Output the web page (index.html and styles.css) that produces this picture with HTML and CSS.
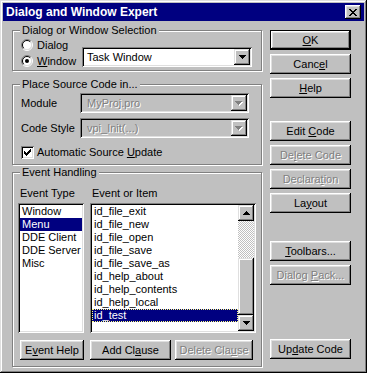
FILE: index.html
```html
<!DOCTYPE html>
<html>
<head>
    <title>Dialog and Window Expert</title>
    <link rel="stylesheet" href="styles.css">
</head>
<body>
    <div class="window">
        <div class="titlebar">
            <span class="title">Dialog and Window Expert</span>
            <button class="close">
                <svg width="8" height="7" viewBox="0 0 8 7" shape-rendering="crispEdges"><path d="M0 0h2v1H0zM6 0h2v1H6zM1 1h2v1H1zM5 1h2v1H5zM2 2h4v1H2zM3 3h2v1H3zM2 4h4v1H2zM1 5h2v1H1zM5 5h2v1H5zM0 6h2v1H0zM6 6h2v1H6z" fill="#000"/></svg>
            </button>
        </div>

        <div class="main">
            <div class="left">
                <fieldset class="group">
                    <legend>Dialog or Window Selection</legend>
                    <div class="sel">
                        <div class="radios">
                            <div class="radio">
                                <svg width="12" height="12" viewBox="0 0 12 12"><circle cx="6" cy="6" r="4.5" fill="#fff"/><path d="M2.1 9.9A5.5 5.5 0 0 1 9.9 2.1" stroke="#808080" fill="none"/><path d="M9.9 2.1A5.5 5.5 0 0 1 2.1 9.9" stroke="#fff" fill="none"/><path d="M2.8 9.2A4.5 4.5 0 0 1 9.2 2.8" stroke="#000" fill="none"/><path d="M9.2 2.8A4.5 4.5 0 0 1 2.8 9.2" stroke="#dfdfdf" fill="none"/></svg>
                                <span>Dialog</span>
                            </div>
                            <div class="radio">
                                <svg width="12" height="12" viewBox="0 0 12 12"><circle cx="6" cy="6" r="4.5" fill="#fff"/><path d="M2.1 9.9A5.5 5.5 0 0 1 9.9 2.1" stroke="#808080" fill="none"/><path d="M9.9 2.1A5.5 5.5 0 0 1 2.1 9.9" stroke="#fff" fill="none"/><path d="M2.8 9.2A4.5 4.5 0 0 1 9.2 2.8" stroke="#000" fill="none"/><path d="M9.2 2.8A4.5 4.5 0 0 1 2.8 9.2" stroke="#dfdfdf" fill="none"/><circle cx="6" cy="6" r="2" fill="#000"/></svg>
                                <span><u>W</u>indow</span>
                            </div>
                        </div>
                        <div class="combo task">
                            <span class="val">Task Window</span>
                            <span class="drop"><svg width="7" height="4" viewBox="0 0 7 4" shape-rendering="crispEdges"><path d="M0 0h7v1H0zM1 1h5v1H1zM2 2h3v1H2zM3 3h1v1H3z" fill="#000"/></svg></span>
                        </div>
                    </div>
                </fieldset>

                <fieldset class="group g-source">
                    <legend>Place Source Code in...</legend>
                    <div class="source">
                        <div class="field">
                            <span>Module</span>
                            <div class="combo disabled">
                                <span class="val">MyProj.pro</span>
                                <span class="drop"><svg width="8" height="5" viewBox="0 0 8 5" shape-rendering="crispEdges"><path d="M1 1h7v1H1zM2 2h5v1H2zM3 3h3v1H3zM4 4h1v1H4z" fill="#fff"/><path d="M0 0h7v1H0zM1 1h5v1H1zM2 2h3v1H2zM3 3h1v1H3z" fill="#808080"/></svg></span>
                            </div>
                        </div>
                        <div class="field">
                            <span>Code Style</span>
                            <div class="combo disabled">
                                <span class="val">vpi_Init(...)</span>
                                <span class="drop"><svg width="8" height="5" viewBox="0 0 8 5" shape-rendering="crispEdges"><path d="M1 1h7v1H1zM2 2h5v1H2zM3 3h3v1H3zM4 4h1v1H4z" fill="#fff"/><path d="M0 0h7v1H0zM1 1h5v1H1zM2 2h3v1H2zM3 3h1v1H3z" fill="#808080"/></svg></span>
                            </div>
                        </div>
                        <div class="check">
                            <span class="box"><svg width="7" height="7" viewBox="0 0 7 7" shape-rendering="crispEdges"><path d="M6 0h1v1H6zM5 1h2v1H5zM0 2h1v1H0zM4 2h3v1H4zM0 3h2v1H0zM3 3h3v1H3zM0 4h5v1H0zM1 5h3v1H1zM2 6h1v1H2z" fill="#000"/></svg></span>
                            <span>Automatic Source <u>U</u>pdate</span>
                        </div>
                    </div>
                </fieldset>

                <fieldset class="group g-events">
                    <legend>Event Handling</legend>
                    <div class="events">
                        <div class="ev-grid">
                            <span class="cap">Event Type</span>
                            <span class="cap">Event or Item</span>
                            <div class="listbox">
                                <div class="items">
                                    <div class="item">Window</div>
                                    <div class="item sel-item">Menu</div>
                                    <div class="item">DDE Client</div>
                                    <div class="item">DDE Server</div>
                                    <div class="item">Misc</div>
                                </div>
                            </div>
                            <div class="listbox">
                                <div class="items">
                                    <div class="item">id_file_exit</div>
                                    <div class="item">id_file_new</div>
                                    <div class="item">id_file_open</div>
                                    <div class="item">id_file_save</div>
                                    <div class="item">id_file_save_as</div>
                                    <div class="item">id_help_about</div>
                                    <div class="item">id_help_contents</div>
                                    <div class="item">id_help_local</div>
                                    <div class="item sel-item focus">id_test</div>
                                </div>
                                <div class="scrollbar">
                                    <span class="sb-btn"><svg width="7" height="4" viewBox="0 0 7 4" shape-rendering="crispEdges"><path d="M3 0h1v1H3zM2 1h3v1H2zM1 2h5v1H1zM0 3h7v1H0z" fill="#000"/></svg></span>
                                    <span class="sb-track"></span>
                                    <span class="sb-thumb"></span>
                                    <span class="sb-btn"><svg width="7" height="4" viewBox="0 0 7 4" shape-rendering="crispEdges"><path d="M0 0h7v1H0zM1 1h5v1H1zM2 2h3v1H2zM3 3h1v1H3z" fill="#000"/></svg></span>
                                </div>
                            </div>
                        </div>
                        <div class="ev-buttons">
                            <button class="btn ev-help">E<u>v</u>ent Help</button>
                            <button class="btn add">Add Cl<u>a</u>use</button>
                            <button class="btn del disabled">Delete Cla<u>u</u>se</button>
                        </div>
                    </div>
                </fieldset>
            </div>

            <div class="right">
                <button class="btn default"><u>O</u>K</button>
                <button class="btn">Canc<u>e</u>l</button>
                <button class="btn"><u>H</u>elp</button>
                <button class="btn gap-md">Edit <u>C</u>ode</button>
                <button class="btn disabled">De<u>l</u>ete Code</button>
                <button class="btn disabled">Declara<u>t</u>ion</button>
                <button class="btn">La<u>y</u>out</button>
                <button class="btn gap-lg"><u>T</u>oolbars...</button>
                <button class="btn disabled">Dialog <u>P</u>ack...</button>
                <button class="btn gap-xl">Up<u>d</u>ate Code</button>
            </div>
        </div>
    </div>
</body>
</html>
```

FILE: styles.css
```css
* {
    box-sizing: border-box;
}
body {
    margin: 0;
    background: #c0c0c0;
    font-family: "Liberation Sans", Arial, sans-serif;
    font-size: 11px;
    line-height: 13px;
    color: #000;
}
.window {
    width: 367px;
    height: 373px;
    padding: 3px;
    background: #c0c0c0;
    box-shadow: inset -1px -1px #000, inset 1px 1px #dfdfdf, inset -2px -2px #808080, inset 2px 2px #fff;
}
.titlebar {
    height: 18px;
    background: #000080;
    color: #fff;
    display: flex;
    align-items: center;
    padding: 0 3px 0 3px;
}
.title {
    flex: 1;
    font-weight: bold;
    font-size: 12px;
}
.close {
    width: 16px;
    height: 14px;
    padding: 0;
    border: 0;
    background: #c0c0c0;
    display: flex;
    align-items: center;
    justify-content: center;
    box-shadow: inset -1px -1px #000, inset 1px 1px #fff, inset -2px -2px #808080, inset 2px 2px #dfdfdf;
}
.main {
    display: flex;
    padding: 3px 0 0 9px;
}
.left {
    width: 250px;
}
.right {
    width: 81px;
    margin-left: 8px;
    padding-top: 6px;
    display: flex;
    flex-direction: column;
}

/* buttons */
.btn {
    width: 81px;
    height: 20px;
    padding: 0;
    border: 0;
    background: #c0c0c0;
    font: inherit;
    color: #000;
    box-shadow: inset -1px -1px #000, inset 1px 1px #fff, inset -2px -2px #808080, inset 2px 2px #dfdfdf;
}
.right .btn + .btn {
    margin-top: 4px;
}
.right .btn.gap-md {
    margin-top: 23px;
}
.right .btn.gap-lg {
    margin-top: 28px;
}
.right .btn.gap-xl {
    margin-top: 54px;
}
.btn.default {
    border: 1px solid #000;
}
.btn.disabled {
    color: #808080;
    text-shadow: 1px 1px 0 #fff;
}

/* group boxes */
.group {
    margin: 0;
    padding: 0;
    min-width: 0;
    width: 250px;
    border: 1px solid #808080;
    box-shadow: inset 1px 1px #fff, 1px 1px #fff;
}
.group legend {
    margin-left: 7px;
    padding: 0 2px;
    line-height: 13px;
    background: #c0c0c0;
}
.g-source {
    margin-top: 7px;
}
.g-events {
    margin-top: 1px;
}

.sel {
    display: grid;
    grid-template-columns: 61px 170px;
    padding: 0 8px 1px;
}
.radio {
    display: flex;
    align-items: center;
    gap: 4px;
    height: 16px;
}
.radio svg {
    display: block;
}
.task {
    margin-top: 10px;
}

/* combo boxes */
.combo {
    height: 20px;
    display: flex;
    align-items: center;
    padding: 2px;
    background: #fff;
    box-shadow: inset 1px 1px #808080, inset -1px -1px #fff, inset 2px 2px #000, inset -2px -2px #dfdfdf;
}
.combo .val {
    flex: 1;
    padding-left: 3px;
    white-space: nowrap;
}
.combo .drop {
    width: 16px;
    height: 16px;
    display: flex;
    align-items: center;
    justify-content: center;
    background: #c0c0c0;
    box-shadow: inset -1px -1px #000, inset 1px 1px #dfdfdf, inset -2px -2px #808080, inset 2px 2px #fff;
}
.combo.disabled {
    background: #c0c0c0;
    color: #808080;
    text-shadow: 1px 1px 0 #fff;
}
.combo.disabled .val {
    padding-left: 5px;
}

.source {
    padding: 2px 8px 5px;
}
.field {
    display: grid;
    grid-template-columns: 59px 169px;
    align-items: center;
}
.field + .field {
    margin-top: 5px;
}
.check {
    display: flex;
    align-items: center;
    gap: 3px;
    height: 13px;
    margin-top: 8px;
}
.check .box {
    width: 13px;
    height: 13px;
    background: #fff;
    display: flex;
    align-items: center;
    justify-content: center;
    box-shadow: inset 1px 1px #808080, inset -1px -1px #fff, inset 2px 2px #000, inset -2px -2px #dfdfdf;
}

/* event handling */
.events {
    padding: 8px 5px 6px;
}
.ev-grid {
    display: grid;
    grid-template-columns: 66px 166px;
    column-gap: 6px;
    row-gap: 3px;
}
.cap {
    padding-left: 2px;
}
.listbox {
    height: 130px;
    padding: 2px;
    display: flex;
    background: #fff;
    box-shadow: inset 1px 1px #808080, inset -1px -1px #fff, inset 2px 2px #000, inset -2px -2px #dfdfdf;
}
.items {
    flex: 1;
}
.item {
    height: 13px;
    padding-left: 2px;
    white-space: nowrap;
}
.sel-item {
    background: #000080;
    color: #fff;
}
.focus {
    outline: 1px dotted #ffff80;
    outline-offset: -1px;
}
.scrollbar {
    width: 16px;
    display: flex;
    flex-direction: column;
}
.sb-btn {
    height: 16px;
    display: flex;
    align-items: center;
    justify-content: center;
    background: #c0c0c0;
    box-shadow: inset -1px -1px #000, inset 1px 1px #dfdfdf, inset -2px -2px #808080, inset 2px 2px #fff;
}
.sb-track {
    height: 37px;
    background: repeating-conic-gradient(#c0c0c0 0 25%, #fff 0 50%) 0 0 / 2px 2px;
}
.sb-thumb {
    flex: 1;
    background: #c0c0c0;
    box-shadow: inset -1px -1px #000, inset 1px 1px #dfdfdf, inset -2px -2px #808080, inset 2px 2px #fff;
}
.ev-buttons {
    display: flex;
    margin-top: 7px;
    padding-left: 2px;
}
.ev-help {
    width: 64px;
}
.add {
    width: 81px;
    margin-left: 6px;
}
.del {
    width: 78px;
    margin-left: 4px;
}
```
